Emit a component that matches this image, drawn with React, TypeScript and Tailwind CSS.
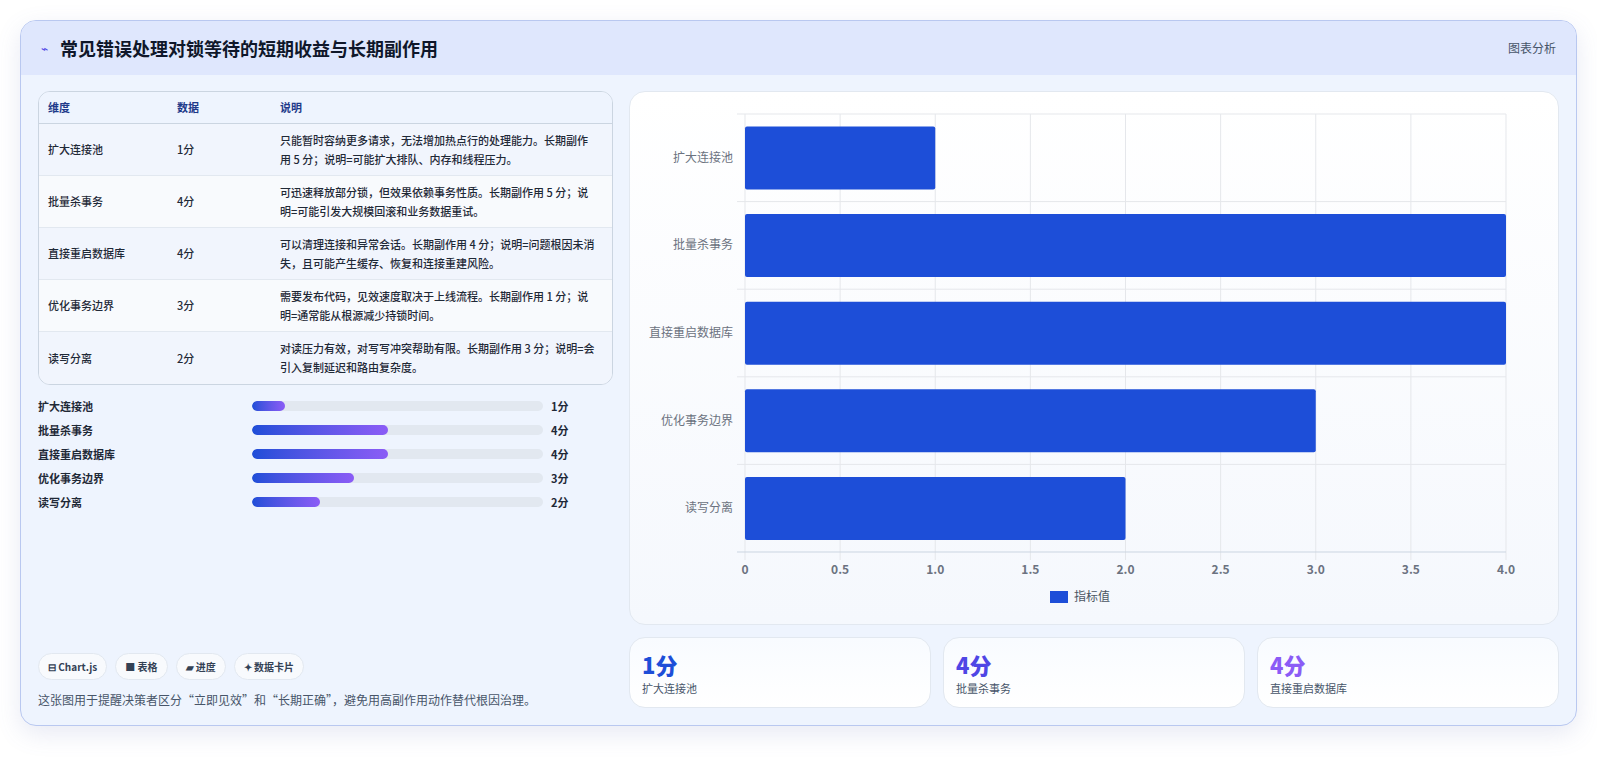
import * as React from 'react';

const rows = [
  { name: '扩大连接池', v: 1, desc: '只能暂时容纳更多请求，无法增加热点行的处理能力。长期副作用 5 分；说明=可能扩大排队、内存和线程压力。' },
  { name: '批量杀事务', v: 4, desc: '可迅速释放部分锁，但效果依赖事务性质。长期副作用 5 分；说明=可能引发大规模回滚和业务数据重试。' },
  { name: '直接重启数据库', v: 4, desc: '可以清理连接和异常会话。长期副作用 4 分；说明=问题根因未消失，且可能产生缓存、恢复和连接重建风险。' },
  { name: '优化事务边界', v: 3, desc: '需要发布代码，见效速度取决于上线流程。长期副作用 1 分；说明=通常能从根源减少持锁时间。' },
  { name: '读写分离', v: 2, desc: '对读压力有效，对写写冲突帮助有限。长期副作用 3 分；说明=会引入复制延迟和路由复杂度。' },
];

const font = { fontFamily: '"Noto Sans CJK SC", "Noto Sans", sans-serif' };

function BarChart() {
  const L = 115, R = 876, T = 22, B = 460;
  const sx = (R - L) / 4;
  const rh = (B - T) / 5;
  return (
    <svg width="900" height="533" viewBox="0 0 900 533" style={font}>
      {[0, 1, 2, 3, 4, 5, 6, 7, 8].map((i) => (
        <line key={i} x1={L + i * sx / 2} x2={L + i * sx / 2} y1={T} y2={B + 8} stroke="#e5e7eb" />
      ))}
      {[0, 1, 2, 3, 4, 5].map((i) => (
        <line key={i} x1={L - 8} x2={R} y1={T + i * rh} y2={T + i * rh} stroke={i === 5 ? '#cbd5e1' : '#e5e7eb'} />
      ))}
      {rows.map((r, i) => (
        <g key={r.name}>
          <rect x={L} y={T + i * rh + 12.5} width={r.v * sx} height={63} fill="#1d4ed8" rx={2} />
          <text x={L - 12} y={T + i * rh + rh / 2 + 4} textAnchor="end" fontSize="12" fill="#6b7280">{r.name}</text>
        </g>
      ))}
      {['0', '0.5', '1.0', '1.5', '2.0', '2.5', '3.0', '3.5', '4.0'].map((t, i) => (
        <text key={t} x={L + i * sx / 2} y={482} textAnchor="middle" fontSize="12" fontWeight="600" fill="#6b7280">{t}</text>
      ))}
      <rect x={420} y={499} width={18} height={12} fill="#1d4ed8" />
      <text x={444} y={509} fontSize="12" fill="#4b5563">指标值</text>
    </svg>
  );
}

export default function App() {
  return (
    <div className="min-h-screen bg-white p-5" style={font}>
      <div className="h-[706px] rounded-2xl border border-[#b9c8f0] bg-[#eef4fe] overflow-hidden shadow-[0_8px_24px_rgba(100,116,180,0.15)] flex flex-col">
        <div className="h-[54px] shrink-0 bg-[#dfe7fd] flex items-center justify-between px-5">
          <div className="flex items-center gap-3">
            <span className="text-[#4f46e5] text-xs">⌁</span>
            <h1 className="text-[18px] font-bold text-[#0f172a]">常见错误处理对锁等待的短期收益与长期副作用</h1>
          </div>
          <span className="text-xs text-[#475569]">图表分析</span>
        </div>
        <div className="flex-1 flex gap-4 px-[17px] pt-4 pb-[18px]">
          <div className="w-[575px] flex flex-col">
            <div className="rounded-xl border border-[#cbd5e1] bg-[#f5f8fe] overflow-hidden text-[11px]">
              <div className="h-8 flex items-center bg-[#eef4fe] border-b border-[#cbd5e1] font-semibold text-[#1e3a8a]">
                <div className="w-[138px] pl-[9px]">维度</div>
                <div className="w-[103px]">数据</div>
                <div>说明</div>
              </div>
              {rows.map((r, i) => (
                <div key={r.name} className={`h-[52px] flex items-center text-[#1f2937] font-medium ${i < 4 ? 'border-b border-[#e2e8f0]' : ''} ${i % 2 === 0 ? 'bg-[#f1f5fd]' : 'bg-[#f8fafd]'}`}>
                  <div className="w-[138px] pl-[9px]">{r.name}</div>
                  <div className="w-[103px]">{r.v}分</div>
                  <div className="flex-1 pr-4 leading-[19px]">{r.desc}</div>
                </div>
              ))}
            </div>
            <div className="mt-3 flex flex-col gap-[6px]">
              {rows.map((r) => (
                <div key={r.name} className="h-[18px] flex items-center text-[11px] font-semibold text-[#1f2937]">
                  <div className="w-[214px]">{r.name}</div>
                  <div className="w-[291px] h-[10px] rounded-full bg-[#e2e8f0] overflow-hidden">
                    <div className="h-full rounded-full bg-gradient-to-r from-[#1d4ed8] to-[#8b5cf6]" style={{ width: `${r.v === 1 ? 11.5 : r.v * 11.7}%` }} />
                  </div>
                  <div className="ml-2">{r.v}分</div>
                </div>
              ))}
            </div>
            <div className="mt-auto flex gap-2">
              {['⊟ Chart.js', '■ 表格', '▰ 进度', '✦ 数据卡片'].map((c) => (
                <span key={c} className="h-[27px] px-[9px] flex items-center rounded-full bg-[#f8fafd] border border-[#e2e8f0] text-[10px] font-semibold text-[#334155]">{c}</span>
              ))}
            </div>
            <p className="mt-3 text-xs text-[#475569]">这张图用于提醒决策者区分“立即见效”和“长期正确”，避免用高副作用动作替代根因治理。</p>
          </div>
          <div className="flex-1 flex flex-col gap-3">
            <div className="h-[534px] rounded-2xl border border-[#e2e8f0] bg-gradient-to-b from-white to-[#f5f8fd] overflow-hidden">
              <BarChart />
            </div>
            <div className="grid grid-cols-3 gap-3">
              {[
                { v: '1分', n: '扩大连接池', c: 'text-[#1d4ed8]' },
                { v: '4分', n: '批量杀事务', c: 'text-[#4f46e5]' },
                { v: '4分', n: '直接重启数据库', c: 'text-[#8b5cf6]' },
              ].map((s) => (
                <div key={s.n} className="h-[71px] rounded-2xl border border-[#e2e8f0] bg-gradient-to-b from-[#f8fbff] to-white px-3 pt-3">
                  <div className={`text-[22px] leading-7 font-extrabold ${s.c}`}>{s.v}</div>
                  <div className="text-[11px] text-[#475569] mt-[2px]">{s.n}</div>
                </div>
              ))}
            </div>
          </div>
        </div>
      </div>
    </div>
  );
}
